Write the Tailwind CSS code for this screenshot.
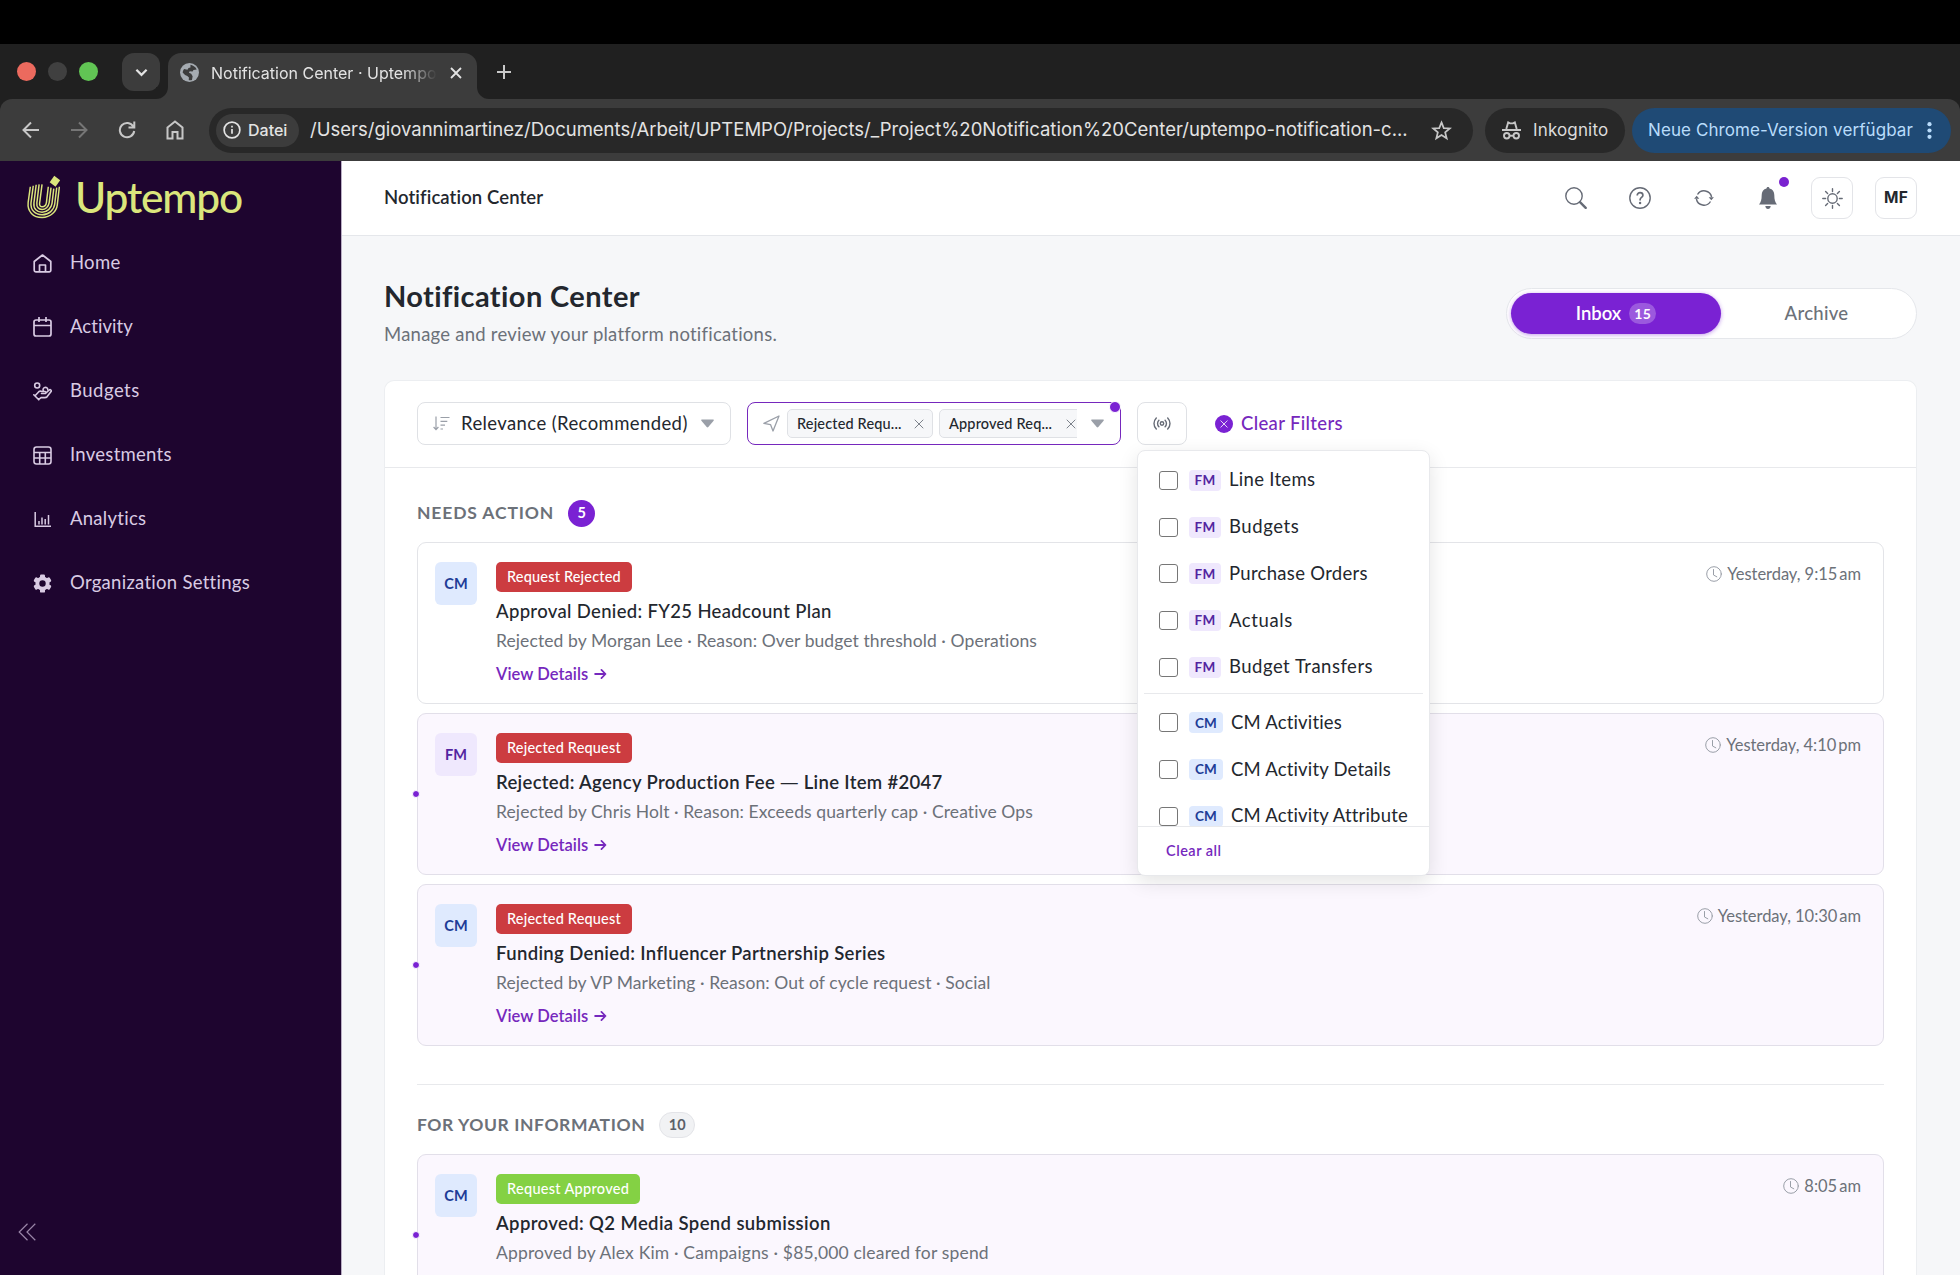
<!DOCTYPE html>
<html lang="en">
<head>
  <meta charset="UTF-8">
  <meta name="viewport" content="width=device-width, initial-scale=1.0">
  <title>Notification Center · Uptempo</title>
  <script src="https://cdn.jsdelivr.net/npm/@tailwindcss/browser@4"></script>
</head>
<body class="bg-black h-[1275px] overflow-hidden flex flex-col font-[Lato,sans-serif] text-[#23272e] pt-[44px]">

<!-- Shared icons -->
<svg class="hidden">
  <symbol id="clock" viewBox="0 0 16 16"><g fill="none" stroke="currentColor" stroke-width="1" stroke-linecap="round"><circle cx="8" cy="8" r="7.3"/><path d="M7.5 3.5V9l3.3 1.8"/></g></symbol>
  <symbol id="x" viewBox="0 0 10 10"><path d="M1 1l8 8M9 1L1 9" fill="none" stroke="currentColor" stroke-linecap="round"/></symbol>
  <symbol id="arrow" viewBox="0 0 14 12"><path d="M1.2 6h11M8 1.6L12.4 6 8 10.4" fill="none" stroke="currentColor" stroke-width="1.9" stroke-linecap="round" stroke-linejoin="round"/></symbol>
</svg>

<!-- Browser tab strip -->
<div class="h-[55px] shrink-0 bg-[#202020] flex items-start font-[Inter,sans-serif] text-[#e3e3e3]">
  <div class="flex gap-[12px] pl-[17px] pt-[18px]">
    <span class="size-[19px] rounded-full bg-[#ec6a5e]"></span>
    <span class="size-[19px] rounded-full bg-[#404040]"></span>
    <span class="size-[19px] rounded-full bg-[#61c554]"></span>
  </div>
  <div class="ml-[24px] mt-[9px] w-[38px] h-[38px] rounded-xl bg-[#3c3c3c] flex items-center justify-center">
    <svg class="w-[13px] h-[9px]" viewBox="0 0 14 9" fill="none" stroke="currentColor" stroke-width="2.400"><path d="M1.500 1.500L7 7l5.500-5.500"/></svg>
  </div>
  <div class="self-end size-[12px] ml-[-4px] bg-[#3c3c3c]"><div class="size-full rounded-br-[12px] bg-[#202020]"></div></div>
  <div class="mt-[9px] h-[46px] w-[309px] rounded-t-[13px] bg-[#3c3c3c] flex items-center pl-[12px] pb-[7px]">
    <svg class="size-[19px] shrink-0" viewBox="0 0 20 20"><circle cx="10" cy="10" r="10" fill="#a5abb1"/><path d="M11 1.800c2 .2 5.400 2 6.600 5l-3.400.6-1 1.600-3-.4-.8 1.600 2.400 1.200 1.500 2.600-.7 3.900c-1 .2-2.500.3-3.400 0l.2-2.700-1.700-1.600-2.400-1-2.500-2.600c.2-1.400.8-3 1.500-3.800l3.500.8 1.200-1.700 2-.6z" fill="#3c3c3c"/></svg>
    <span class="ml-[12px] w-[226px] overflow-hidden whitespace-nowrap text-[16px] mask-r-from-85%">Notification Center · Uptempo</span>
    <svg class="ml-[13px] size-[12px] shrink-0" viewBox="0 0 12 12" fill="none" stroke="currentColor" stroke-width="1.800"><path d="M1 1l10 10M11 1L1 11"/></svg>
  </div>
  <div class="self-end size-[12px] bg-[#3c3c3c]"><div class="size-full rounded-bl-[12px] bg-[#202020]"></div></div>
  <svg class="ml-[8px] mt-[21px] size-[14px] text-[#c9c9c9]" viewBox="0 0 14 14" fill="none" stroke="currentColor" stroke-width="2"><path d="M7 0v14M0 7h14"/></svg>
</div>

<!-- Browser toolbar -->
<div class="h-[62px] shrink-0 bg-[#202020] font-[Inter,sans-serif]">
  <div class="h-full rounded-t-[12px] bg-[#3c3c3c] flex items-center pl-[22px] pr-[9px] text-[#c7c7c7]">
    <svg class="size-[18px]" viewBox="0 0 18 18" fill="none" stroke="currentColor" stroke-width="2"><path d="M17 9H2M9 1.500L1.500 9 9 16.500"/></svg>
    <svg class="ml-[30px] size-[18px] text-[#767676]" viewBox="0 0 18 18" fill="none" stroke="currentColor" stroke-width="2"><path d="M1 9h15M9 1.500L16.500 9 9 16.500"/></svg>
    <svg class="ml-[30px] size-[18px]" viewBox="0 0 18 18" fill="none" stroke="currentColor" stroke-width="2"><path d="M15.300 5.500A7.200 7.200 0 1 0 16.200 10M16.300.5v6H10.500"/></svg>
    <svg class="ml-[30px] w-[18px] h-[20px]" viewBox="0 0 18 20" fill="none" stroke="currentColor" stroke-width="2"><path d="M1.500 7.500L9 1.500l7.500 6V18.500H11.500V12h-5v6.500h-5z"/></svg>
    <div class="ml-[25px] w-[1264px] h-[45px] rounded-full bg-[#282828] flex items-center pl-[7px] pr-[21px]">
      <div class="w-[83px] h-[33px] shrink-0 rounded-full bg-[#3c3c3c] flex items-center pl-[7px] text-[#e3e3e3]">
        <svg class="size-[18px]" viewBox="0 0 19 19" fill="none" stroke="currentColor" stroke-width="1.800"><circle cx="9.500" cy="9.500" r="8.300"/><path d="M9.500 8.500v5M9.500 5v1.900"/></svg>
        <span class="ml-[7px] text-[16px] font-medium">Datei</span>
      </div>
      <span class="ml-[11px] flex-1 whitespace-nowrap text-[18.5px] text-[#e3e3e3]">/Users/giovannimartinez/Documents/Arbeit/UPTEMPO/Projects/_Project%20Notification%20Center/uptempo-notification-c...</span>
      <svg class="size-[21px] shrink-0" viewBox="0 0 24 24" fill="none" stroke="currentColor" stroke-width="2"><path d="M12 2.800l2.600 6.400 6.900.5-5.300 4.400 1.700 6.800-5.900-3.700-5.900 3.700 1.700-6.800-5.300-4.400 6.900-.5z"/></svg>
    </div>
    <div class="ml-[12px] w-[140px] h-[45px] shrink-0 rounded-full bg-[#282828] flex items-center pl-[17px]">
      <svg class="size-[19px]" viewBox="0 0 20 20" fill="none" stroke="currentColor" stroke-width="2"><path d="M4.500 8.500L6.500 1.500l2 1h3l2-1 2 7M0 9.500h20"/><circle cx="5" cy="15.500" r="2.900"/><circle cx="15" cy="15.500" r="2.900"/><path d="M8 15.500h4"/></svg>
      <span class="ml-[12px] pt-px text-[17px] tracking-[0.15px] text-[#dcdcdc]">Inkognito</span>
    </div>
    <div class="ml-[7px] w-[319px] h-[45px] shrink-0 rounded-full bg-[#1f4a75] flex items-center pl-[16px] text-[#b9dcfb]">
      <span class="pt-px text-[17px] tracking-[0.09px] whitespace-nowrap">Neue Chrome-Version verfügbar</span>
      <svg class="ml-[14px] w-[5px] h-[17px]" viewBox="0 0 5 17" fill="currentColor"><circle cx="2.500" cy="2.200" r="2.100"/><circle cx="2.500" cy="8.500" r="2.100"/><circle cx="2.500" cy="14.800" r="2.100"/></svg>
    </div>
  </div>
</div>

<div class="flex-1 min-h-0 flex">

  <!-- Sidebar -->
  <aside class="w-[342px] shrink-0 bg-[#1e052f] border-r border-[#b9aec4] flex flex-col text-[#d9cbe3]">
    <div class="h-[69px] flex items-center pl-[26px] pt-[3px] text-[#dbe67c]">
      <svg class="w-[36px] h-[44px]" viewBox="0 0 36 45" fill="none" stroke="currentColor" stroke-width="1.500">
        <path d="M28.500.8l6 4.500-4.700 6.700-6-4.600z" fill="currentColor" stroke="none"/>
        <path d="M4 12L1.800 28C.8 37.500 7 43.500 16 43.500S30.800 37 31.600 30.500L33.700 12"/>
        <path d="M7 11L4.700 28.500C4 36 9 40.700 16 40.700s12.300-5 13-11L31 13"/>
        <path d="M10 10L7.700 28.500C7 34.500 10.800 38 16 38s9.500-4 10.200-9L28 14"/>
        <path d="M13 9.500l-2.300 19c-.5 4.500 2 6.800 5.300 6.800s6.700-2.700 7.300-7L25.200 13"/>
        <path d="M16 9.500l-2.500 19.500c-.3 2.500 1 3.500 2.700 3.500s3.900-1.500 4.300-4.500L22.400 12"/>
      </svg>
      <span class="ml-[13px] text-[42.5px] leading-none font-medium tracking-[-1.200px]">Uptempo</span>
    </div>
    <nav class="flex flex-col pt-px text-[18.5px] tracking-[0.28px]">
      <a class="h-16 flex items-center gap-[18px] pl-[33px]">
        <svg class="size-[19px]" viewBox="0 0 19 19" fill="none" stroke="currentColor" stroke-width="1.700" stroke-linejoin="round"><path d="M1.200 7.500L9.500 1l8.300 6.500V16.200a1.600 1.600 0 0 1-1.600 1.600H2.800a1.600 1.600 0 0 1-1.600-1.600zM6.500 17.500V11h6v6.500"/></svg>
        Home
      </a>
      <a class="h-16 flex items-center gap-[18px] pl-[33px] tracking-[0.05px]">
        <svg class="w-[19px] h-[20px]" viewBox="0 0 19 20" fill="none" stroke="currentColor" stroke-width="1.700"><rect x="1" y="3" width="17" height="16" rx="2"/><path d="M1 8.500h17M6 0v5M13 0v5"/></svg>
        Activity
      </a>
      <a class="h-16 flex items-center gap-[18px] pl-[33px] tracking-[0.5px]">
        <svg class="size-[19px]" viewBox="0 0 19 19" fill="none" stroke="currentColor" stroke-width="1.600" stroke-linejoin="round" stroke-linecap="round"><circle cx="4.200" cy="3.500" r="2.500"/><path d="M10.500 9.200a2.400 2.400 0 1 1 4.300-1.200"/><path d="M.8 12.800l5 5M2.300 13.500l3.500-3.800c1-.9 2-.8 3.200-.2h3c1.200 0 1.400 1.900 0 2H8.500M12.500 11.500l3.700-3.500c1.200-.9 2.600.4 1.900 1.600l-3.900 5c-.8.900-1.500 1-2.500 1H8l-2.500 2"/></svg>
        Budgets
      </a>
      <a class="h-16 flex items-center gap-[18px] pl-[33px]">
        <svg class="size-[19px]" viewBox="0 0 19 19" fill="none" stroke="currentColor" stroke-width="1.600"><rect x="1" y="1" width="17" height="17" rx="2.500"/><path d="M1 6.500h17M1 12h17M6.700 6.500V18M12.300 6.500V18"/></svg>
        Investments
      </a>
      <a class="h-16 flex items-center gap-[18px] pl-[33px]">
        <svg class="size-[19px]" viewBox="0 0 19 19" fill="none" stroke="currentColor" stroke-width="1.500"><path d="M2.200 2v14.200H18M6 11v3.500M9 7.500v7M12.200 9v5.500M15.500 5v9.500"/></svg>
        Analytics
      </a>
      <a class="h-16 flex items-center gap-[18px] pl-[33px]">
        <svg class="size-[19px]" viewBox="0 0 19 19"><g fill="currentColor"><circle cx="9.500" cy="9.500" r="7"/><rect x="7" y=".4" width="5" height="18.200" rx="1.200"/><rect x="7" y=".4" width="5" height="18.200" rx="1.200" transform="rotate(60 9.500 9.500)"/><rect x="7" y=".4" width="5" height="18.200" rx="1.200" transform="rotate(120 9.500 9.500)"/></g><circle cx="9.500" cy="9.500" r="3.200" fill="#1e052f"/></svg>
        Organization Settings
      </a>
    </nav>
    <svg class="mt-auto mb-[34px] ml-[18px] size-[18px] text-[#9a86a8]" viewBox="0 0 18 18" fill="none" stroke="currentColor" stroke-width="1.200"><path d="M9.500.8L1.200 9l8.300 8.200M17.300.8L9 9l8.300 8.200"/></svg>
  </aside>

  <main class="flex-1 min-w-0 bg-[#f6f7f9] flex flex-col">

    <!-- Top bar -->
    <header class="h-[75px] shrink-0 bg-white border-b border-[#e5e7eb] flex items-center pl-[42px] pr-[43px] text-[#666b76]">
      <span class="text-[18.5px] font-semibold tracking-[0.1px] text-[#23272e] mr-auto">Notification Center</span>
      <div class="flex items-center gap-[42px]">
        <svg class="size-[22px]" viewBox="0 0 22 22" fill="none" stroke="currentColor"><circle cx="9" cy="9" r="8.200" stroke-width="1.400"/><path d="M15 15.200l5.700 5.600" stroke-width="2.400" stroke-linecap="round"/></svg>
        <svg class="size-[22px]" viewBox="0 0 22 22" fill="none" stroke="currentColor" stroke-width="1.400"><circle cx="11" cy="11" r="10.200"/><path d="M8.200 8.500c0-3.800 5.700-3.600 5.700-.2 0 2.200-2.800 2.100-2.800 4.500v.6" stroke-width="1.700"/><circle cx="11.100" cy="16" r="1.200" fill="currentColor" stroke="none"/></svg>
        <svg class="size-[22px]" viewBox="0 0 22 22" fill="none" stroke="currentColor" stroke-width="1.400"><path d="M4.500 7.500A7.700 7.700 0 0 1 18.600 10M17.500 14.500A7.700 7.700 0 0 1 3.400 12"/><path d="M15.700 10.200h5.200L18.300 13.300zM1.100 11.800h5.200L3.700 8.700z" fill="currentColor" stroke="none"/></svg>
        <div class="relative">
          <svg class="size-[22px]" viewBox="0 0 22 22" fill="currentColor"><path d="M11 0c.9 0 1.500.6 1.500 1.600 3.100.7 4.800 3.200 4.800 6.400 0 4.600.9 7.600 2.700 9.500H2c1.800-1.900 2.700-4.900 2.700-9.500 0-3.200 1.700-5.700 4.800-6.400C9.500.6 10.100 0 11 0zM8.300 19h5.400c-.2 1.800-1.200 3-2.700 3s-2.500-1.200-2.700-3z"/></svg>
          <span class="absolute left-[22px] top-[-10px] size-[10px] rounded-full bg-[#7a22d0]"></span>
        </div>
      </div>
      <div class="ml-[32px] size-[42px] rounded-[9px] border border-[#e3e4e8] flex items-center justify-center">
        <svg class="size-[21px]" viewBox="0 0 21 21" fill="none" stroke="currentColor" stroke-width="1.400" stroke-linecap="round"><circle cx="10.500" cy="10.500" r="4.700"/><path d="M10.500.8v2.800M10.500 17.400v2.800M.8 10.500h2.800M17.400 10.500h2.800M3.600 3.600l2 2M15.400 15.400l2 2M17.400 3.600l-2 2M5.600 15.400l-2 2"/></svg>
      </div>
      <div class="ml-[22px] size-[42px] rounded-[9px] border border-[#e3e4e8] flex items-center justify-center font-[Inter,sans-serif] text-[15.5px] font-bold tracking-[0.2px] text-[#23272e]">MF</div>
    </header>

    <!-- Page heading -->
    <div class="pl-[42px] pr-[43px] pt-[42px] pb-[34px] flex items-start shrink-0">
      <div class="mr-auto">
        <h1 class="text-[29px] leading-[36px] font-bold tracking-[0.4px]">Notification Center</h1>
        <p class="mt-[8px] text-[18.5px] leading-[24px] tracking-[0.24px] text-[#6c7179]">Manage and review your platform notifications.</p>
      </div>
      <div class="mt-[10px] w-[411px] h-[51px] rounded-full bg-white border border-[#e5e7eb] p-[4px] flex text-[18.5px]">
        <div class="w-[210px] h-[41px] rounded-full bg-[#7a22d3] text-white font-semibold flex items-center justify-center gap-[8px] shadow-[0_1px_4px_rgba(122,34,211,0.45)]">
          Inbox
          <span class="w-[27px] h-[21px] rounded-full bg-white/25 flex items-center justify-center text-[14px] font-bold tracking-[0.4px]">15</span>
        </div>
        <div class="flex-1 flex items-center justify-center font-medium tracking-[0.3px] text-[#6c7179]">Archive</div>
      </div>
    </div>

    <!-- Notifications panel -->
    <section class="mx-[42px] w-[1533px] flex-1 min-h-0 rounded-t-[10px] bg-white border border-b-0 border-[#eceef1]">

      <!-- Filter bar -->
      <div class="h-[87px] border-b border-[#e8e9ec] flex items-center pl-[32px] pb-[1px]">
        <div class="w-[314px] h-[43px] rounded-[8px] border border-[#dfe1e5] flex items-center pl-[15px]">
          <svg class="w-[17px] h-[15px] text-[#9a9fa8]" viewBox="0 0 17 15" fill="none" stroke="currentColor" stroke-width="1.200"><path d="M3 .5v13M.6 11L3 13.600 5.400 11M7.500 1.500h9M7.500 5.300h6.800M7.500 9.200h4.500M7.500 13h2.500"/></svg>
          <span class="ml-[11px] text-[18.5px] tracking-[0.4px]">Relevance (Recommended)</span>
          <svg class="ml-[13px] w-[13px] h-[9px] text-[#9a9fa8]" viewBox="0 0 13 9" fill="currentColor"><path d="M1 .5h11c.8 0 1 .7.6 1.200L7.300 8.100c-.5.600-1.100.600-1.600 0L.4 1.700C0 1.200.2.500 1 .5z"/></svg>
        </div>

        <div class="relative ml-[16px] w-[374px] h-[43px] rounded-[8px] border border-[#7628bd] flex items-center pl-[15px]">
          <svg class="size-[17px] shrink-0 text-[#9a9fa8]" viewBox="0 0 17 17" fill="none" stroke="currentColor" stroke-width="1.300" stroke-linejoin="round"><path d="M16 1L.9 8.400l6.600 1.200L10 16z"/></svg>
          <div class="ml-[7px] w-[290px] overflow-hidden flex gap-[6px] text-[14.5px] font-medium tracking-[0.16px]">
            <span class="w-[146px] h-[29px] shrink-0 rounded-[5px] border border-[#dfe1e5] bg-[#f6f7f9] flex items-center pl-[9px]"><span class="w-[106px] mr-[11px] shrink-0 whitespace-nowrap">Rejected Requ...</span><svg class="size-[10px] text-[#7d828b]"><use href="#x"/></svg></span>
            <span class="w-[146px] h-[29px] shrink-0 rounded-[5px] border border-[#dfe1e5] bg-[#f6f7f9] flex items-center pl-[9px]"><span class="w-[106px] mr-[11px] shrink-0 whitespace-nowrap">Approved Req...</span><svg class="size-[10px] text-[#7d828b]"><use href="#x"/></svg></span>
          </div>
          <svg class="ml-[14px] w-[13px] h-[9px] text-[#9a9fa8]" viewBox="0 0 13 9" fill="currentColor"><path d="M1 .5h11c.8 0 1 .7.6 1.200L7.300 8.100c-.5.600-1.100.600-1.600 0L.4 1.700C0 1.200.2.500 1 .5z"/></svg>
          <span class="absolute right-[-1px] top-[-2px] size-[12px] rounded-full bg-[#7a22d3] border border-white"></span>
        </div>

        <div class="relative ml-[16px] w-[50px] h-[43px] rounded-[8px] border border-[#dfe1e5] flex items-center justify-center">
          <svg class="w-[18px] h-[13px] text-[#666b76]" viewBox="0 0 18 13" fill="none" stroke="currentColor" stroke-width="1.400" stroke-linecap="round"><circle cx="9" cy="6.500" r="1.700"/><path d="M5.900 3.300a4.500 4.500 0 0 0 0 6.400M12.100 3.300a4.500 4.500 0 0 1 0 6.400M3.300.9a8 8 0 0 0 0 11.200M14.700.9a8 8 0 0 1 0 11.200"/></svg>

          <!-- Source dropdown -->
          <div class="absolute left-[-1px] top-[47px] z-10 w-[293px] h-[426px] rounded-[8px] bg-white border border-[#e8e9ec] shadow-[0_6px_20px_rgba(0,0,0,0.11)] flex flex-col text-[18.5px] tracking-[0.18px]">
            <div class="flex-1 min-h-0 overflow-hidden pt-[6px]">
              <div class="h-[46.700px] flex items-center pl-[21px]"><span class="size-[19px] rounded-[3px] border border-[#767676] mr-[11px]"></span><span class="w-[32px] h-[21px] rounded-[4px] bg-[#efe8fd] text-[#5325a0] text-[13.5px] font-bold flex items-center justify-center mr-[8px]">FM</span><span class="tracking-[0.3px]">Line Items</span></div>
              <div class="h-[46.700px] flex items-center pl-[21px]"><span class="size-[19px] rounded-[3px] border border-[#767676] mr-[11px]"></span><span class="w-[32px] h-[21px] rounded-[4px] bg-[#efe8fd] text-[#5325a0] text-[13.5px] font-bold flex items-center justify-center mr-[8px]">FM</span><span class="tracking-[0.6px]">Budgets</span></div>
              <div class="h-[46.700px] flex items-center pl-[21px]"><span class="size-[19px] rounded-[3px] border border-[#767676] mr-[11px]"></span><span class="w-[32px] h-[21px] rounded-[4px] bg-[#efe8fd] text-[#5325a0] text-[13.5px] font-bold flex items-center justify-center mr-[8px]">FM</span><span class="tracking-[0.3px]">Purchase Orders</span></div>
              <div class="h-[46.700px] flex items-center pl-[21px]"><span class="size-[19px] rounded-[3px] border border-[#767676] mr-[11px]"></span><span class="w-[32px] h-[21px] rounded-[4px] bg-[#efe8fd] text-[#5325a0] text-[13.5px] font-bold flex items-center justify-center mr-[8px]">FM</span><span class="tracking-[0.6px]">Actuals</span></div>
              <div class="h-[46.700px] flex items-center pl-[21px]"><span class="size-[19px] rounded-[3px] border border-[#767676] mr-[11px]"></span><span class="w-[32px] h-[21px] rounded-[4px] bg-[#efe8fd] text-[#5325a0] text-[13.5px] font-bold flex items-center justify-center mr-[8px]">FM</span><span class="tracking-[0.5px]">Budget Transfers</span></div>
              <hr class="mt-[3px] mb-[5px] mx-[6px] border-[#e8e9ec]">
              <div class="h-[46.700px] flex items-center pl-[21px]"><span class="size-[19px] rounded-[3px] border border-[#767676] mr-[11px]"></span><span class="w-[34px] h-[21px] rounded-[4px] bg-[#dfeafe] text-[#213c96] text-[13.5px] font-bold flex items-center justify-center mr-[8px]">CM</span>CM Activities</div>
              <div class="h-[46.700px] flex items-center pl-[21px]"><span class="size-[19px] rounded-[3px] border border-[#767676] mr-[11px]"></span><span class="w-[34px] h-[21px] rounded-[4px] bg-[#dfeafe] text-[#213c96] text-[13.5px] font-bold flex items-center justify-center mr-[8px]">CM</span>CM Activity Details</div>
              <div class="h-[46.700px] flex items-center pl-[21px] whitespace-nowrap"><span class="size-[19px] shrink-0 rounded-[3px] border border-[#767676] mr-[11px]"></span><span class="w-[34px] h-[21px] shrink-0 rounded-[4px] bg-[#dfeafe] text-[#213c96] text-[13.5px] font-bold flex items-center justify-center mr-[8px]">CM</span>CM Activity Attribute</div>
            </div>
            <div class="h-[49px] shrink-0 border-t border-[#e8e9ec] pl-[28px] flex items-center text-[14.5px] font-semibold tracking-[0.5px] text-[#7628bd]">Clear all</div>
          </div>
        </div>

        <a class="ml-[28px] flex items-center gap-[8px] text-[18.5px] font-medium tracking-[0.35px] text-[#7628bd]">
          <span class="size-[18px] rounded-full bg-[#7a22d3] text-white flex items-center justify-center"><svg class="size-[8px]"><use href="#x"/></svg></span>
          Clear Filters
        </a>
      </div>

      <div class="pl-[32px] pr-[32px]">

        <!-- Needs action -->
        <div class="h-[75px] pt-[15px] flex items-center gap-[14px]">
          <h2 class="text-[17.5px] font-bold tracking-[0.86px] text-[#6c7179]">NEEDS ACTION</h2>
          <span class="size-[27px] rounded-full bg-[#7a22d3] text-white text-[14.5px] font-bold flex items-center justify-center">5</span>
        </div>

        <div class="mt-[-1px] flex flex-col gap-[9px]">
          <article class="h-[162px] rounded-[9px] border border-[#e3e4e8] bg-white flex items-start pl-[17px] pr-[22px] pt-[19px]">
            <div class="w-[42px] h-[43px] rounded-[6px] bg-[#dfeafe] text-[#213c96] text-[14.5px] font-bold flex items-center justify-center">CM</div>
            <div class="ml-[19px] mr-auto flex flex-col items-start">
              <span class="h-[30px] px-[11px] rounded-[5px] bg-[#cc3c40] text-white text-[14.5px] font-medium tracking-[0.18px] flex items-center">Request Rejected</span>
              <h3 class="mt-[7px] text-[18.5px] leading-[24px] font-medium tracking-[0.33px]">Approval Denied: FY25 Headcount Plan</h3>
              <p class="mt-[6px] text-[17.5px] leading-[24px] tracking-[0.09px] text-[#6c7179]">Rejected by Morgan Lee · Reason: Over budget threshold · Operations</p>
              <a class="mt-[11px] flex items-center gap-[6px] text-[16.5px] leading-[20px] font-semibold tracking-[0.05px] text-[#7628bd]">View Details <svg class="w-[13px] h-[12px]"><use href="#arrow"/></svg></a>
            </div>
            <div class="flex items-center gap-[5px] text-[16.5px] leading-[24px] tracking-[-0.04px] text-[#6c7179]"><svg class="size-[16px] text-[#9a9fa8]"><use href="#clock"/></svg>Yesterday, 9:15&#8201;am</div>
          </article>

          <article class="relative h-[162px] rounded-[9px] border border-[#e2dfe9] bg-[#fbf7fe] flex items-start pl-[17px] pr-[22px] pt-[19px]">
            <span class="absolute left-[-6px] top-1/2 -translate-y-1/2 size-[8px] rounded-full bg-[#7a22d3] border border-white"></span>
            <div class="w-[42px] h-[43px] rounded-[6px] bg-[#efe8fd] text-[#5325a0] text-[14.5px] font-bold flex items-center justify-center">FM</div>
            <div class="ml-[19px] mr-auto flex flex-col items-start">
              <span class="h-[30px] px-[11px] rounded-[5px] bg-[#cc3c40] text-white text-[14.5px] font-medium tracking-[0.18px] flex items-center">Rejected Request</span>
              <h3 class="mt-[7px] text-[18.5px] leading-[24px] font-semibold tracking-[0.32px]">Rejected: Agency Production Fee <span class="font-['Open_Sans'] font-medium">—</span> Line Item #2047</h3>
              <p class="mt-[6px] text-[17.5px] leading-[24px] tracking-[0.1px] text-[#6c7179]">Rejected by Chris Holt · Reason: Exceeds quarterly cap · Creative Ops</p>
              <a class="mt-[11px] flex items-center gap-[6px] text-[16.5px] leading-[20px] font-semibold tracking-[0.05px] text-[#7628bd]">View Details <svg class="w-[13px] h-[12px]"><use href="#arrow"/></svg></a>
            </div>
            <div class="flex items-center gap-[5px] text-[16.5px] leading-[24px] tracking-[-0.04px] text-[#6c7179]"><svg class="size-[16px] text-[#9a9fa8]"><use href="#clock"/></svg>Yesterday, 4:10&#8201;pm</div>
          </article>

          <article class="relative h-[162px] rounded-[9px] border border-[#e2dfe9] bg-[#fbf7fe] flex items-start pl-[17px] pr-[22px] pt-[19px]">
            <span class="absolute left-[-6px] top-1/2 -translate-y-1/2 size-[8px] rounded-full bg-[#7a22d3] border border-white"></span>
            <div class="w-[42px] h-[43px] rounded-[6px] bg-[#dfeafe] text-[#213c96] text-[14.5px] font-bold flex items-center justify-center">CM</div>
            <div class="ml-[19px] mr-auto flex flex-col items-start">
              <span class="h-[30px] px-[11px] rounded-[5px] bg-[#cc3c40] text-white text-[14.5px] font-medium tracking-[0.18px] flex items-center">Rejected Request</span>
              <h3 class="mt-[7px] text-[18.5px] leading-[24px] font-semibold tracking-[0.36px]">Funding Denied: Influencer Partnership Series</h3>
              <p class="mt-[6px] text-[17.5px] leading-[24px] tracking-[0.08px] text-[#6c7179]">Rejected by VP Marketing · Reason: Out of cycle request · Social</p>
              <a class="mt-[11px] flex items-center gap-[6px] text-[16.5px] leading-[20px] font-semibold tracking-[0.05px] text-[#7628bd]">View Details <svg class="w-[13px] h-[12px]"><use href="#arrow"/></svg></a>
            </div>
            <div class="flex items-center gap-[5px] text-[16.5px] leading-[24px] tracking-[-0.04px] text-[#6c7179]"><svg class="size-[16px] text-[#9a9fa8]"><use href="#clock"/></svg>Yesterday, 10:30&#8201;am</div>
          </article>
        </div>

        <!-- For your information -->
        <div class="mt-[38px] border-t border-[#e8e9ec] h-[70px] pt-[11px] flex items-center gap-[14px]">
          <h2 class="text-[17.5px] font-bold tracking-[0.58px] text-[#6c7179]">FOR YOUR INFORMATION</h2>
          <span class="w-[36px] h-[26px] rounded-full bg-[#f1f2f4] border border-[#e3e4e8] text-[#5b6069] text-[14.5px] font-bold flex items-center justify-center">10</span>
        </div>

        <article class="relative h-[162px] rounded-[9px] border border-[#e2dfe9] bg-[#fbf7fe] flex items-start pl-[17px] pr-[22px] pt-[19px]">
          <span class="absolute left-[-6px] top-1/2 -translate-y-1/2 size-[8px] rounded-full bg-[#7a22d3] border border-white"></span>
          <div class="w-[42px] h-[43px] rounded-[6px] bg-[#dfeafe] text-[#213c96] text-[14.5px] font-bold flex items-center justify-center">CM</div>
          <div class="ml-[19px] mr-auto flex flex-col items-start">
            <span class="h-[30px] px-[11px] rounded-[5px] bg-[#84d144] text-white text-[14.5px] font-medium tracking-[0.3px] flex items-center">Request Approved</span>
            <h3 class="mt-[7px] text-[18.5px] leading-[24px] font-semibold tracking-[0.38px]">Approved: Q2 Media Spend submission</h3>
            <p class="mt-[6px] text-[17.5px] leading-[24px] tracking-[0.17px] text-[#6c7179]">Approved by Alex Kim · Campaigns · $85,000 cleared for spend</p>
          </div>
          <div class="flex items-center gap-[5px] text-[16.5px] leading-[24px] text-[#6c7179]"><svg class="size-[16px] text-[#9a9fa8]"><use href="#clock"/></svg>8:05&#8201;am</div>
        </article>

      </div>
    </section>
  </main>
</div>

</body>
</html>
